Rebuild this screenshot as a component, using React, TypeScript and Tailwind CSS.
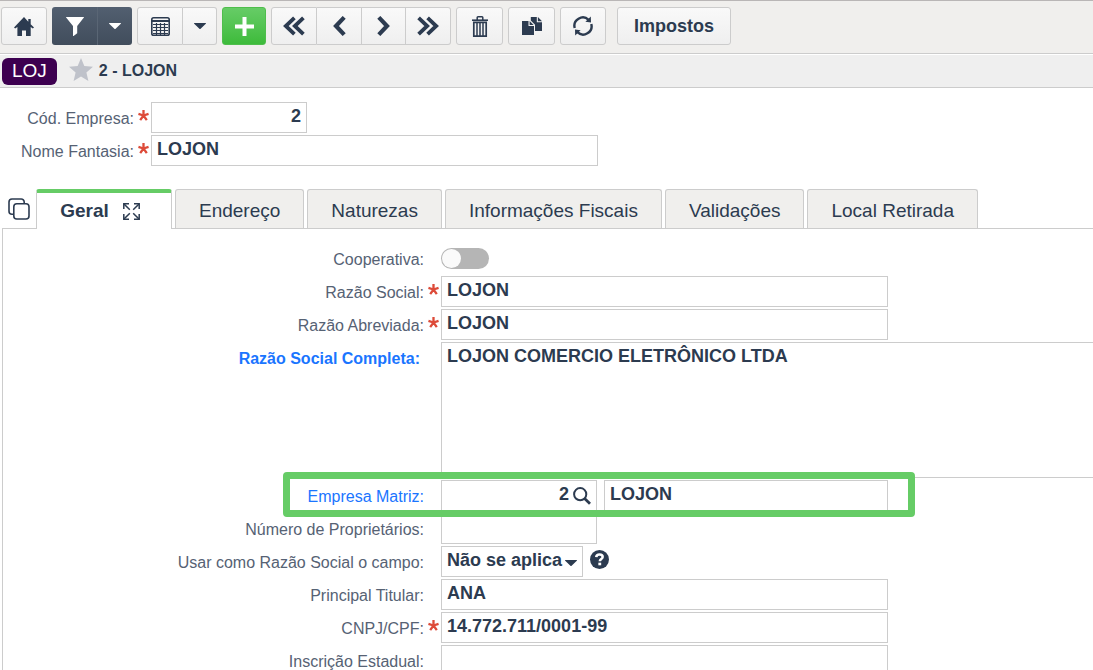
import React from 'react';

type IconProps = { className?: string };

const HomeIcon = ({ className }: IconProps) => (
    <svg viewBox="0 0 20 19" className={className} fill="currentColor" aria-hidden="true">
        <path d="M10 0 0 10.6l1.2 1L3.4 10v9H8v-5.4h4V19h4.7v-9l2.1 1.6 1.2-1-3.3-3.4V2h-2.4v2.8z" />
    </svg>
);

const FilterIcon = ({ className }: IconProps) => (
    <svg viewBox="0 0 18 19" className={className} fill="currentColor" aria-hidden="true">
        <path d="M.3 0h17.4c.3 0 .4.3.2.6L11.2 9v7.2L7.6 19H7V9L.1.6C-.1.3 0 0 .3 0z" />
    </svg>
);

const CaretIcon = ({ className }: IconProps) => (
    <svg viewBox="0 0 12 6" className={className} fill="currentColor" aria-hidden="true">
        <path d="M.4 0h11.2c.4 0 .5.4.2.7L6.6 5.7c-.4.4-.8.4-1.2 0L.2.7C-.1.4 0 0 .4 0z" />
    </svg>
);

const TableIcon = ({ className }: IconProps) => (
    <svg viewBox="0 0 19 19" className={className} fill="none" stroke="currentColor" aria-hidden="true">
        <rect x="0.8" y="0.8" width="17.4" height="17.4" rx="1.8" strokeWidth="1.6" />
        <path d="M1 4h17" strokeWidth="2" />
        <path d="M2 7.5h15M2 10.5h15M2 13.5h15M2 16.5h15M5.5 6v12M9.5 6v12M13.5 6v12" strokeWidth="1.2" />
    </svg>
);

const PlusIcon = ({ className }: IconProps) => (
    <svg viewBox="0 0 19 19" className={className} fill="currentColor" aria-hidden="true">
        <path d="M7.5 0h4v7.5H19v4h-7.5V19h-4v-7.5H0v-4h7.5z" />
    </svg>
);

const ChevronIcon = ({ className }: IconProps) => (
    <svg viewBox="0 0 13 20" className={className} fill="none" stroke="currentColor" strokeWidth="4.2" aria-hidden="true">
        <path d="M11.2 1.4 3 10l8.2 8.6" />
    </svg>
);

const DoubleChevronIcon = ({ className }: IconProps) => (
    <svg viewBox="0 0 22 20" className={className} fill="none" stroke="currentColor" strokeWidth="3.8" aria-hidden="true">
        <path d="m11.4 1.8-8.6 8.2 8.6 8.2M20.4 1.8l-8.6 8.2 8.6 8.2" />
    </svg>
);

const TrashIcon = ({ className }: IconProps) => (
    <svg viewBox="0 0 16 21" className={className} fill="none" stroke="currentColor" aria-hidden="true">
        <path d="M0 4.2h16" strokeWidth="1.6" />
        <path d="M5.2 4V1.6c0-.5.3-.8.8-.8h4c.5 0 .8.3.8.8V4" strokeWidth="1.5" />
        <path d="M1.8 6.4h12.4v13.7H1.8z" strokeWidth="1.7" />
        <path d="M5 7v13M8 7v13M11 7v13" strokeWidth="1.5" />
    </svg>
);

const CopyIcon = ({ className }: IconProps) => (
    <svg viewBox="0 0 20 18" className={className} fill="currentColor" aria-hidden="true">
        <path d="M0 4h6.5v5H12v9H0z" />
        <path d="m7.6 4 4 4h-4z" />
        <path d="M8.8 0h6v5.2H20V14h-7V7.7L8.8 3.4z" />
        <path d="m15.9 0 4.1 4.2h-4.1z" />
    </svg>
);

const RefreshIcon = ({ className }: IconProps) => (
    <svg viewBox="0 0 20 20" className={className} fill="none" stroke="currentColor" strokeWidth="2.4" aria-hidden="true">
        <path d="M1.7 12A8.4 8.4 0 0 1 15.6 3.8M18.3 8A8.4 8.4 0 0 1 4.4 16.2" />
        <path d="m17.8.6.2 5.8-5.6-.6zM2.2 19.4 2 13.6l5.6.6z" fill="currentColor" stroke="none" />
    </svg>
);

const StarIcon = ({ className }: IconProps) => (
    <svg viewBox="0 0 24 23" className={className} fill="currentColor" aria-hidden="true">
        <path d="m12 0 3.3 8 8.7.7-6.6 5.7 2 8.6-7.4-4.6L4.6 23l2-8.6L0 8.7 8.7 8z" />
    </svg>
);

const StackIcon = ({ className }: IconProps) => (
    <svg viewBox="0 0 22 22" className={className} fill="none" stroke="currentColor" strokeWidth="1.6" aria-hidden="true">
        <rect x="5.8" y="5.8" width="15.2" height="15.2" rx="3" />
        <path d="M5.6 16.2H4a3 3 0 0 1-3-3V4a3 3 0 0 1 3-3h9.2a3 3 0 0 1 3 3v1.6" />
    </svg>
);

const ExpandIcon = ({ className }: IconProps) => (
    <svg viewBox="0 0 17 17" className={className} fill="none" stroke="currentColor" strokeWidth="1.5" aria-hidden="true">
        <path d="M.8 6V.8H6M11 .8h5.2V6M16.2 11v5.2H11M6 16.2H.8V11" />
        <path d="m1 1 5.8 5.8M16 1l-5.8 5.8M16 16l-5.8-5.8M1 16l5.8-5.8" />
    </svg>
);

const SearchIcon = ({ className }: IconProps) => (
    <svg viewBox="0 0 18 18" className={className} fill="none" stroke="currentColor" aria-hidden="true">
        <circle cx="7.2" cy="7.2" r="6.1" strokeWidth="2" />
        <path d="m11.6 11.6 5.4 5.2" strokeWidth="2.8" />
    </svg>
);

const HelpIcon = ({ className }: IconProps) => (
    <svg viewBox="0 0 18 18" className={className} aria-hidden="true">
        <circle cx="9" cy="9" r="9" fill="currentColor" />
        <path d="M5.9 6.7C6.1 4.9 7.3 4.3 9 4.3c1.8 0 3 .8 3 2.3 0 2-2.7 1.8-2.7 4" fill="none" stroke="white" strokeWidth="2.4" />
        <path d="M7.9 12h2.7v2.5H7.9z" fill="white" />
    </svg>
);

const AsteriskIcon = ({ className }: IconProps) => (
    <svg viewBox="0 0 10 10" className={className} fill="none" stroke="currentColor" strokeWidth="2.1" aria-hidden="true">
        <path d="M5 0v5M5 5 .4 3.5M5 5l4.6-1.5M5 5 2 9.2M5 5l3 4.2" />
    </svg>
);

const light = 'flex h-[38px] items-center justify-center border border-[#cccccc] bg-linear-to-b from-[#f9f9f9] to-[#efefef]';

const field = 'h-[31px] border border-[#cccccc] bg-white px-[5px] pb-0.5 text-[18px] font-bold text-[#2c3b50] outline-none';

interface RowProps {
    id: string;
    label: string;
    required?: boolean;
    wide?: boolean;
    labelClass?: string;
    children: React.ReactNode;
}

const Row: React.FC<RowProps> = ({ id, label, required, wide, labelClass = 'text-[#566274]', children }) => (
    <div className="relative flex items-start">
        <label
            htmlFor={id}
            className={`flex h-[31px] shrink-0 items-center justify-end pt-0.5 text-base ${wide ? 'w-[421px]' : 'w-[134px]'} ${labelClass}`}
        >
            {label}
        </label>
        <span className="flex h-[31px] w-[17px] shrink-0 justify-center pt-2 pl-0.5">
            {required && <AsteriskIcon className="size-[11px] text-[#dd4b39]" />}
        </span>
        {children}
    </div>
);

const tabs = ['Endereço', 'Naturezas', 'Informações Fiscais', 'Validações', 'Local Retirada'];

const Toolbar: React.FC = () => (
    <header className="flex h-[54px] gap-[5px] border-t border-b border-t-[#b9b6b6] border-b-[#cccccc] bg-[#f0efed] pt-1.5 pl-px text-[#2c3b50]">
        <button aria-label="Início" className={`${light} w-[46px] rounded-[3px]`}>
            <HomeIcon className="h-[19px] w-5" />
        </button>
        <div className="flex text-white">
            <button aria-label="Filtrar" className="flex h-[38px] w-[45px] items-center justify-center rounded-l-[3px] bg-linear-to-b from-[#525f70] to-[#414d5c]">
                <FilterIcon className="h-[19px] w-[18px]" />
            </button>
            <button aria-label="Opções de filtro" className="flex h-[38px] w-[35px] items-center justify-center rounded-r-[3px] border-l border-[#5a6675] bg-linear-to-b from-[#525f70] to-[#414d5c]">
                <CaretIcon className="h-1.5 w-3" />
            </button>
        </div>
        <div className="flex">
            <button aria-label="Grade" className={`${light} w-[46px] rounded-l-[3px]`}>
                <TableIcon className="size-[19px]" />
            </button>
            <button aria-label="Opções de grade" className={`${light} w-[34px] rounded-r-[3px] border-l-0`}>
                <CaretIcon className="h-1.5 w-3" />
            </button>
        </div>
        <button aria-label="Adicionar" className="flex h-[38px] w-11 items-center justify-center rounded-[3px] border border-[#4fbe4c] bg-linear-to-b from-[#66cc66] to-[#3dbb3a] text-white">
            <PlusIcon className="size-[19px]" />
        </button>
        <div className="flex">
            <button aria-label="Primeiro" className={`${light} w-[46px] rounded-l-[3px]`}>
                <DoubleChevronIcon className="h-5 w-[22px]" />
            </button>
            <button aria-label="Anterior" className={`${light} w-[45px] border-l-0`}>
                <ChevronIcon className="h-5 w-[13px]" />
            </button>
            <button aria-label="Próximo" className={`${light} w-11 border-l-0`}>
                <ChevronIcon className="h-5 w-[13px] rotate-180" />
            </button>
            <button aria-label="Último" className={`${light} w-[45px] rounded-r-[3px] border-l-0`}>
                <DoubleChevronIcon className="h-5 w-[22px] rotate-180" />
            </button>
        </div>
        <button aria-label="Excluir" className={`${light} w-[47px] rounded-[3px]`}>
            <TrashIcon className="h-[21px] w-4" />
        </button>
        <button aria-label="Duplicar" className={`${light} w-[47px] rounded-[3px]`}>
            <CopyIcon className="h-[18px] w-5" />
        </button>
        <button aria-label="Atualizar" className={`${light} w-[46px] rounded-[3px]`}>
            <RefreshIcon className="size-5" />
        </button>
        <button className={`${light} ml-1.5 rounded-[3px] px-4 text-[18px] font-bold`}>Impostos</button>
    </header>
);

const App: React.FC = () => {
    return (
        <div className="h-screen overflow-hidden bg-white font-['Liberation_Sans',Arial,sans-serif] text-[#2c3b50]">
            <Toolbar />

            <div className="flex h-[34px] items-center border-t border-b border-t-white border-b-[#cccccc] bg-[#efefef] pl-0.5">
                <span className="flex h-[27px] items-center rounded-md bg-[#3d0050] px-2.5 text-[19px] text-white">LOJ</span>
                <button aria-label="Favorito" className="ml-3 pb-1 text-[#bfc2ca]">
                    <StarIcon className="h-[23px] w-6" />
                </button>
                <h1 className="ml-1.5 text-base font-bold">2 - LOJON</h1>
            </div>

            <main>
                <section className="flex flex-col gap-0.5 pt-3.5">
                    <Row id="codigo" label="Cód. Empresa:" required>
                        <input id="codigo" defaultValue="2" className={`${field} w-[156px] text-right`} />
                    </Row>
                    <Row id="fantasia" label="Nome Fantasia:" required>
                        <input id="fantasia" defaultValue="LOJON" className={`${field} w-[447px]`} />
                    </Row>
                </section>

                <nav className="mt-[23px] flex items-end pl-2">
                    <button aria-label="Abas" className="w-7 self-center">
                        <StackIcon className="size-[22px]" />
                    </button>
                    <div className="flex items-end gap-[3px] text-[19px]">
                        {/* active tab covers the top border of the panel */}
                        <button className="relative z-10 -mb-px flex h-10 w-[136px] items-center justify-center gap-3.5 rounded-t-[3px] border-x border-t-4 border-x-[#cccccc] border-t-[#66cc66] bg-white pr-2 font-bold">
                            Geral
                            <ExpandIcon className="size-[17px]" />
                        </button>
                        {tabs.map((tab) => (
                            <button key={tab} className="h-[39px] rounded-t-[3px] border border-b-0 border-[#cccccc] bg-[#f0efed] px-[23px] pt-1">
                                {tab}
                            </button>
                        ))}
                    </div>
                </nav>

                <section className="ml-0.5 flex flex-col gap-0.5 border-t border-l border-[#cccccc] pt-3.5">
                    <Row id="cooperativa" label="Cooperativa:" wide>
                        <span className="flex h-[31px] items-center">
                            <input
                                id="cooperativa"
                                type="checkbox"
                                role="switch"
                                className="h-[21px] w-12 appearance-none rounded-full bg-[#b5b5b5] p-px before:block before:size-[19px] before:rounded-full before:bg-[#fafafa] before:content-[''] checked:bg-[#66cc66] checked:before:ml-[27px]"
                            />
                        </span>
                    </Row>
                    <Row id="razao" label="Razão Social:" wide required>
                        <input id="razao" defaultValue="LOJON" className={`${field} w-[447px]`} />
                    </Row>
                    <Row id="abreviada" label="Razão Abreviada:" wide required>
                        <input id="abreviada" defaultValue="LOJON" className={`${field} w-[447px]`} />
                    </Row>
                    <Row id="completa" label="Razão Social Completa:" wide labelClass="pr-1 font-bold text-[#1a75ff]">
                        <textarea
                            id="completa"
                            defaultValue="LOJON COMERCIO ELETRÔNICO LTDA"
                            className="h-[136px] flex-1 resize-none border border-r-0 border-[#cccccc] px-[5px] text-[18px] font-bold outline-none"
                        />
                    </Row>
                    <Row id="matriz" label="Empresa Matriz:" wide labelClass="text-[#1a75ff]">
                        <div className="flex h-[31px] w-[156px] items-center border border-[#cccccc] pr-[5px]">
                            <input id="matriz" defaultValue="2" className="min-w-0 flex-1 pr-1 pb-0.5 text-right text-[18px] font-bold outline-none" />
                            <button aria-label="Pesquisar empresa">
                                <SearchIcon className="size-[18px]" />
                            </button>
                        </div>
                        <input aria-label="Nome da empresa matriz" defaultValue="LOJON" className={`${field} ml-[7px] w-[284px]`} />
                        <div className="pointer-events-none absolute -top-2 left-[280px] z-10 h-[45px] w-[632px] rounded-sm border-7 border-[#66cc66]" />
                    </Row>
                    <Row id="proprietarios" label="Número de Proprietários:" wide>
                        <input id="proprietarios" className={`${field} w-[156px]`} />
                    </Row>
                    <Row id="campo" label="Usar como Razão Social o campo:" wide>
                        <div className="relative">
                            <select id="campo" className={`${field} w-[142px] appearance-none`}>
                                <option>Não se aplica</option>
                            </select>
                            <CaretIcon className="pointer-events-none absolute top-3.5 right-1.5 h-1.5 w-3" />
                        </div>
                        <button aria-label="Ajuda" className="mt-1 ml-[7px]">
                            <HelpIcon className="size-[19px]" />
                        </button>
                    </Row>
                    <Row id="titular" label="Principal Titular:" wide>
                        <input id="titular" defaultValue="ANA" className={`${field} w-[447px]`} />
                    </Row>
                    <Row id="cnpj" label="CNPJ/CPF:" wide required>
                        <input id="cnpj" defaultValue="14.772.711/0001-99" className={`${field} w-[447px]`} />
                    </Row>
                    <Row id="inscricao" label="Inscrição Estadual:" wide>
                        <input id="inscricao" className={`${field} w-[447px]`} />
                    </Row>
                </section>
            </main>
        </div>
    );
};

export default App;
